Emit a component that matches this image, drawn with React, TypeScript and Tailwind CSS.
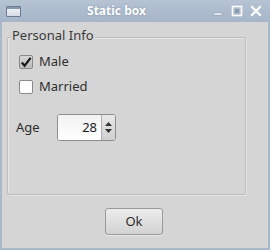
export default function App() {
  return (
    <div className="w-[270px] h-[250px] flex flex-col bg-[#a9b8ca] font-['Noto_Sans',sans-serif] overflow-hidden">
      {/* title bar */}
      <div className="h-[22px] flex items-center px-[6px] bg-gradient-to-b from-[#b5c3d3] to-[#a6b5c8]">
        <div className="w-[15px] h-[11px] border border-[#6c7b8f] bg-gradient-to-b from-[#f4f6f9] to-[#d4dbe4] rounded-[1px]">
          <div className="h-[2px] bg-[#8797ab]" />
        </div>
        <div className="flex-1 text-center text-white text-[12px] font-bold leading-none [text-shadow:0_0_2px_#7d8da2]">
          Static box
        </div>
        <div className="flex items-center gap-[7px] pr-[2px]">
          <svg width="12" height="12" viewBox="0 0 12 12">
            <rect x="2" y="8" width="8" height="2" fill="#fff" stroke="#8495aa" strokeWidth="0.5" />
          </svg>
          <svg width="12" height="12" viewBox="0 0 12 12">
            <rect x="1.5" y="1.5" width="9" height="9" fill="none" stroke="#fff" strokeWidth="1.6" />
            <rect x="4" y="4" width="4" height="4" fill="#8a9bb0" />
          </svg>
          <svg width="12" height="12" viewBox="0 0 12 12">
            <path d="M2 2 L10 10 M10 2 L2 10" stroke="#fff" strokeWidth="2.2" strokeLinecap="square" />
          </svg>
        </div>
      </div>
      {/* body */}
      <div className="flex-1 mx-[2px] mb-[2px] bg-[#d5d5d5] flex flex-col px-[5px] pt-[5px] text-[#2e2e2e] text-[13px]">
        <div className="relative mt-[10px] h-[158px] w-[239px] border border-[#bdbdbd] rounded-[2px] shadow-[inset_1px_1px_0_#e6e6e6,1px_1px_0_#e6e6e6]">
          <span className="absolute -top-[11px] left-[3px] px-[1px] bg-[#d5d5d5] leading-[16px] text-[#3a3a3a]">
            Personal Info
          </span>
          <div className="flex flex-col pl-[11px] pt-[17px] gap-[11px]">
            <label className="flex items-center gap-[6px] h-[14px]">
              <span className="w-[14px] h-[14px] border border-[#8a8a8a] rounded-[2px] bg-gradient-to-b from-[#d6d6d6] to-[#bdbdbd] flex items-center justify-center">
                <svg width="13" height="13" viewBox="0 0 13 13">
                  <path d="M2 6.5 L5 10 L11.5 1.5" fill="none" stroke="#1a1a1a" strokeWidth="2.4" />
                </svg>
              </span>
              Male
            </label>
            <label className="flex items-center gap-[6px] h-[14px]">
              <span className="w-[14px] h-[14px] border border-[#8a8a8a] rounded-[2px] bg-white" />
              Married
            </label>
          </div>
          <div className="flex items-center pl-[8px] mt-[20px]">
            <span className="w-[41px]">Age</span>
            <div className="flex h-[27px] w-[59px] border border-[#8d8d8d] rounded-[3px] bg-white overflow-hidden">
              <div className="flex-1 flex items-center justify-end pr-[4px] bg-gradient-to-b from-[#f2f2f2] to-white text-[#1c1c1c]">28</div>
              <div className="w-[14px] border-l border-[#b0b0b0] bg-gradient-to-b from-[#e8e8e8] to-[#cfcfcf] flex flex-col items-center justify-center gap-[3px]">
                <svg width="7" height="4" viewBox="0 0 7 4"><path d="M3.5 0 L7 4 L0 4 Z" fill="#333" /></svg>
                <svg width="7" height="4" viewBox="0 0 7 4"><path d="M0 0 L7 0 L3.5 4 Z" fill="#333" /></svg>
              </div>
            </div>
          </div>
        </div>
        <div className="flex justify-center mt-[13px]">
          <button className="w-[58px] h-[27px] border border-[#9a9a9a] rounded-[3px] bg-gradient-to-b from-[#ececec] to-[#d2d2d2] text-[#2e2e2e] text-[13px] ml-[-2px] shadow-[0_1px_0_#e8e8e8]">
            Ok
          </button>
        </div>
      </div>
    </div>
  );
}
